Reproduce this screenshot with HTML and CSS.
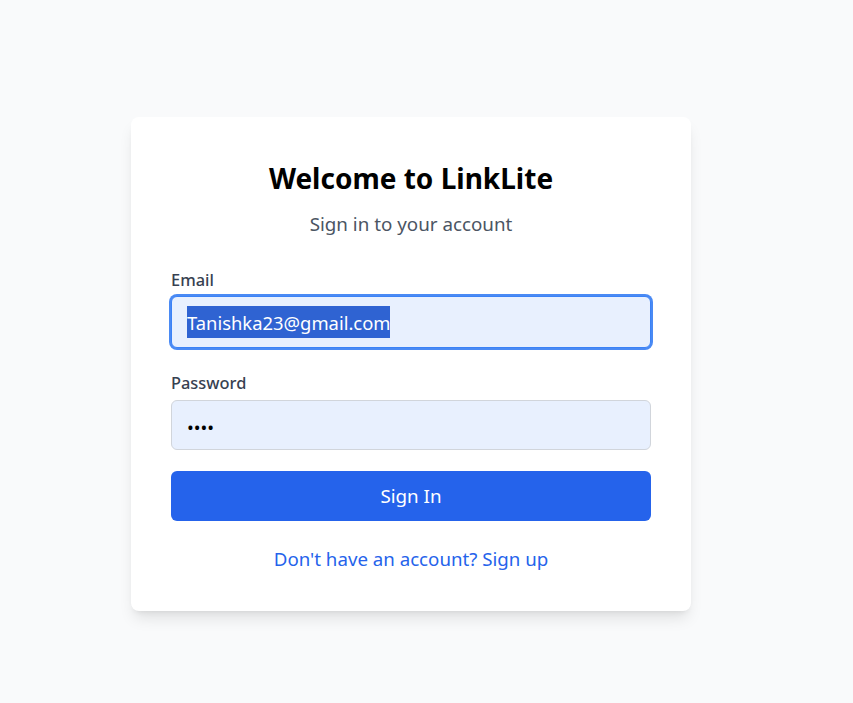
FILE: index.html
```html
<!DOCTYPE html>
<html lang="en">
<head>
<meta charset="utf-8">
<title>LinkLite - Sign in</title>
<link rel="stylesheet" href="styles.css">
</head>
<body>
<main class="page">
  <form class="card">
    <h1 class="title">Welcome to LinkLite</h1>
    <p class="subtitle">Sign in to your account</p>
    <div class="field">
      <label class="label">Email</label>
      <div class="input input-focus"><span class="selected">Tanishka23@gmail.com</span></div>
    </div>
    <div class="field field-pw">
      <label class="label">Password</label>
      <div class="input input-pw"><span class="dots">••••</span></div>
    </div>
    <button type="button" class="btn">Sign In</button>
    <p class="switch"><a href="#" class="link">Don't have an account? Sign up</a></p>
  </form>
</main>
</body>
</html>
```
FILE: styles.css
```css
* { box-sizing: border-box; }
html, body { margin: 0; padding: 0; }
body {
  background: #f9fafb;
  font-family: "Noto Sans", "Open Sans", sans-serif;
  color: #111827;
}
.page {
  display: flex;
  align-items: flex-start;
  padding: 117px 0 0 131px;
  min-height: 703px;
}
.card {
  width: 560px;
  background: #fff;
  border-radius: 8px;
  box-shadow: 0 10px 15px -3px rgba(0,0,0,0.1), 0 4px 6px -4px rgba(0,0,0,0.1);
  padding: 40px 40px 38px;
  display: flex;
  flex-direction: column;
}
.title {
  margin: 0;
  text-align: center;
  font-size: 28px;
  line-height: 42px;
  font-weight: 700;
  color: #000;
}
.subtitle {
  margin: 11px 0 0;
  text-align: center;
  font-size: 18.8px;
  line-height: 28px;
  color: #4b5563;
}
.field { display: flex; flex-direction: column; margin-top: 30px; }
.field-pw { margin-top: 23px; }
.label {
  font-size: 16.4px;
  line-height: 24px;
  font-weight: 500;
  color: #374151;
  margin-bottom: 4px;
}
.field-pw .label { margin-bottom: 5px; }
.input {
  height: 52px;
  border: 1px solid #d1d5db;
  border-radius: 6px;
  background: #e8f0fe;
  display: flex;
  align-items: center;
  padding: 0 15px;
  font-size: 18.4px;
  color: #000;
}
.input-focus {
  border-color: #3b82f6;
  box-shadow: 0 0 0 2px #4a8af4;
}
.selected {
  background: #2f63d2;
  color: #fff;
  line-height: 30px;
  padding-top: 2px;
}
.input-pw { height: 50px; padding-top: 3px; }
.dots { font-size: 18px; }
.btn {
  margin-top: 21px;
  height: 50px;
  border: 0;
  border-radius: 6px;
  background: #2563eb;
  color: #fff;
  font-family: inherit;
  font-size: 18.8px;
}
.switch {
  margin: 24px 0 0;
  text-align: center;
  font-size: 18.7px;
  line-height: 28px;
}
.link { color: #2563eb; text-decoration: none; }
```
